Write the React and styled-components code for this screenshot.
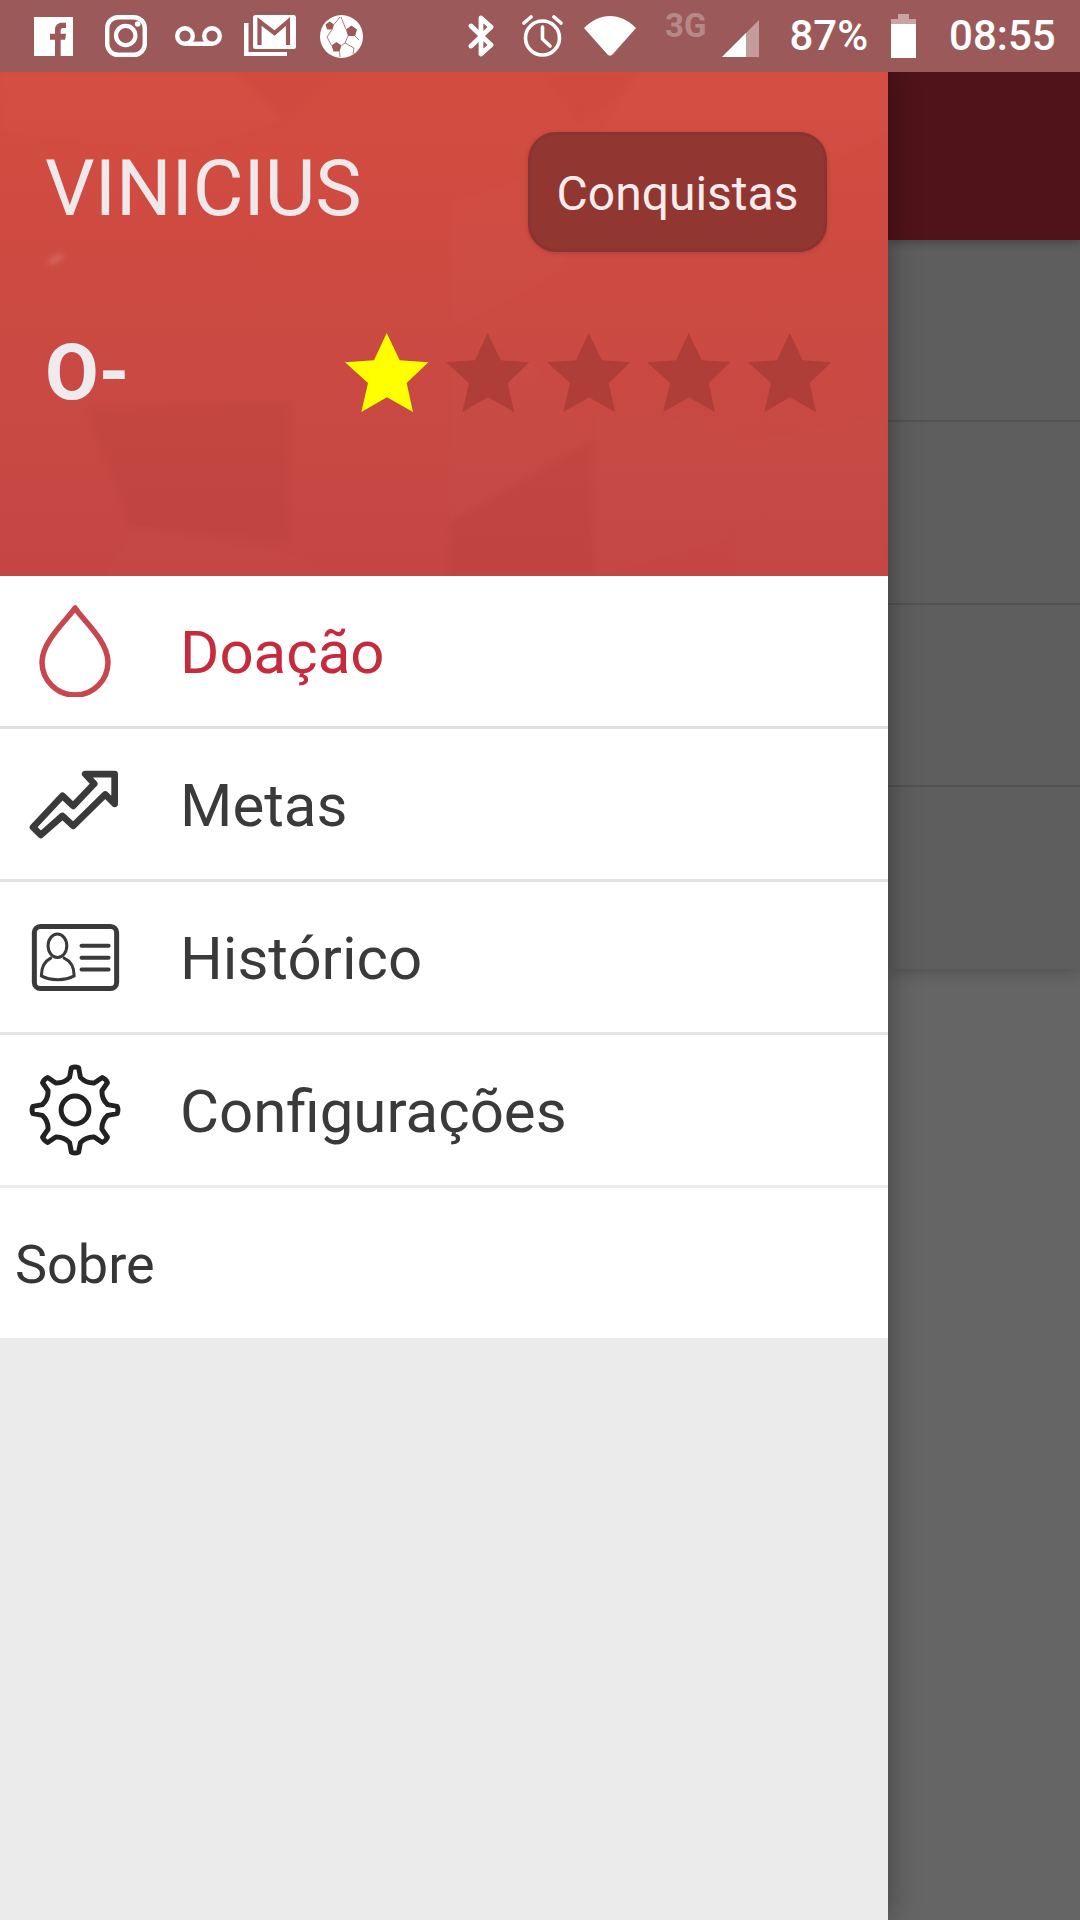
import React from "react";
import styled, { createGlobalStyle } from "styled-components";

const GlobalStyle = createGlobalStyle`
html, body {
    margin: 0;
    padding: 0;
    background: #656565;
    font-family: Roboto, "Liberation Sans", sans-serif;
}
* { box-sizing: border-box; }
`

const Screen = styled.div`
width: 1080px;
height: 1920px;
display: flex;
flex-direction: column;
overflow: hidden;
`

const StatusBar = styled.div`
height: 72px;
flex: none;
display: flex;
align-items: center;
background-color: #9b5a59;
color: #fff;
position: relative;
z-index: 2;
`

const StatusIcon = styled.svg`
flex: none;
display: block;
margin-left: ${props => props.$left}px;
margin-top: ${props => props.$top || 0}px;
`

const StatusText = styled.span`
flex: none;
font-size: ${props => props.$size || 42}px;
font-weight: ${props => props.$weight || 500};
line-height: 1;
margin-left: ${props => props.$left}px;
margin-top: ${props => props.$top || 0}px;
color: ${props => props.$color || "#fff"};
white-space: nowrap;
`

const Body = styled.div`
flex: 1;
display: flex;
min-height: 0;
`

const Drawer = styled.div`
width: 888px;
flex: none;
display: flex;
flex-direction: column;
background-color: #ecebec;
box-shadow: 0 0 28px rgba(0, 0, 0, 0.36);
position: relative;
z-index: 1;
`

const Header = styled.div`
height: 504px;
flex: none;
padding: 60px 56px 0 45px;
position: relative;
overflow: hidden;
background: linear-gradient(180deg, #d44c40 0%, #cb4a42 50%, #c44544 100%);
`

const Facets = styled.svg`
position: absolute;
top: 0;
left: 0;
filter: blur(3px);
`

const HeaderContent = styled.div`
position: relative;
`

const TopRow = styled.div`
display: flex;
justify-content: space-between;
align-items: flex-start;
height: 120px;
`

const UserName = styled.div`
font-size: 78px;
font-weight: 400;
line-height: 78px;
margin-top: 18px;
color: #f0e8ea;
`

const AchievementsButton = styled.button`
width: 299px;
height: 120px;
margin-right: 5px;
border: 3px solid #8b3330;
border-radius: 28px;
background-color: #923632;
color: #f7ecec;
font-family: inherit;
font-size: 48px;
font-weight: 400;
padding: 2px 0 0;
box-shadow: 0 1px 4px rgba(120, 30, 30, 0.3);
`

const InfoRow = styled.div`
display: flex;
justify-content: space-between;
align-items: flex-start;
margin-top: 81px;
`

const BloodType = styled.div`
font-size: 78px;
font-weight: 700;
line-height: 78px;
margin-top: 1px;
color: #eeeaee;
`

const Stars = styled.div`
display: flex;
gap: 16.7px;
`

const Star = styled.svg`
display: block;
width: 84px;
height: 80px;
fill: ${props => props.$on ? "#ffff00" : "#ae3e37"};
`

const Menu = styled.div`
display: flex;
flex-direction: column;
background-color: #fff;
`

const MenuRow = styled.div`
height: ${props => props.$height || 153}px;
display: flex;
align-items: center;
border-bottom: ${props => props.$line ? `3px solid ${props.$line}` : "0"};
`

const IconSlot = styled.div`
width: 150px;
flex: none;
display: flex;
justify-content: center;
`

const MenuLabel = styled.span`
margin-left: 30px;
padding-top: 4px;
font-size: 60px;
line-height: 1;
color: ${props => props.$active ? "#c62b3d" : "#3a3a3a"};
`

const AboutLabel = styled.span`
margin-left: 15px;
padding-top: 4px;
font-size: 54px;
line-height: 1;
color: #363636;
`

const Backdrop = styled.div`
flex: 1;
display: flex;
flex-direction: column;
background-color: #656565;
`

const AppBar = styled.div`
height: 168px;
flex: none;
background-color: #4f1319;
box-shadow: 0 3px 8px rgba(0, 0, 0, 0.25);
position: relative;
`

const ListCard = styled.div`
height: 729px;
flex: none;
display: flex;
flex-direction: column;
background-color: #5f5e5f;
box-shadow: 0 4px 14px rgba(0, 0, 0, 0.18);
`

const ListItem = styled.div`
height: ${props => props.$height}px;
flex: none;
border-bottom: ${props => props.$last ? "0" : "2px solid #535253"};
`

function gearPath(cx, cy, outer, inner, teeth) {
    const step = (Math.PI * 2) / teeth
    let d = ""
    const pt = (r, a) => `${(cx + r * Math.sin(a)).toFixed(1)} ${(cy - r * Math.cos(a)).toFixed(1)}`
    for (let i = 0; i < teeth; i++) {
        const a = i * step
        const s = step * 0.2
        d += `${i === 0 ? "M" : "L"}${pt(outer, a - s * 0.55)} `
        d += `Q${pt(outer + 4, a)} ${pt(outer, a + s * 0.55)} `
        d += `L${pt(inner + 6, a + s * 1.05)} `
        d += `Q${pt(inner - 7, a + step / 2)} ${pt(inner + 6, a + step - s * 1.05)} `
    }
    return d + "Z"
}

const STAR_POINTS = "41.7,0 54.7,27.3 83.3,29.3 61.7,50 68,79 42,64.3 16.3,79 23,50 0,29.3 29,27.3"

function HeaderFacets() {
    return (
        <Facets width="888" height="504" viewBox="0 0 888 504">
            <polygon points="0,0 235,0 285,50 200,75 60,70 0,60" fill="#fff" opacity="0.012" />
            <polygon points="240,0 340,0 285,50" fill="#000" opacity="0.012" />
            <polygon points="545,0 640,0 580,50" fill="#000" opacity="0.014" />
            <polygon points="640,0 888,0 888,60 750,130 600,60" fill="#fff" opacity="0.014" />
            <polygon points="450,130 640,60 560,200 450,260" fill="#fff" opacity="0.01" />
            <polygon points="85,335 290,330 290,470 130,455" fill="#000" opacity="0.014" />
            <polygon points="130,455 290,480 330,504 105,504" fill="#fff" opacity="0.012" />
            <polygon points="450,300 530,290 595,368 450,450" fill="#fff" opacity="0.014" />
            <polygon points="590,368 595,504 450,504 450,450" fill="#000" opacity="0.014" />
            <polygon points="595,340 740,350 730,470 595,504" fill="#fff" opacity="0.01" />
            <polygon points="730,370 888,340 888,504 735,504" fill="#fff" opacity="0.01" />
            <polygon points="49,189 63,182 62,185 50,192" fill="#fff" opacity="0.4" />
        </Facets>
    )
}

function Status() {
    return (
        <StatusBar>
            <StatusIcon $left={34} width="39" height="39" viewBox="0 0 39 39">
                <path fill="#fff" fillRule="evenodd" d="M0 0H39V39H0ZM21 39V22.7H16V16.7H21V13C21 8 24 5.7 28 5.7H32V11H29C27.5 11 26.7 12 26.7 13.5V16.7H32L31.2 22.7H26.7V39Z" />
            </StatusIcon>
            <StatusIcon $left={32} width="42" height="42" viewBox="0 0 42 42" fill="none" stroke="#fff">
                <rect x="2.2" y="2.2" width="37.6" height="37.6" rx="11" strokeWidth="4.4" />
                <circle cx="20.7" cy="20.5" r="9.7" strokeWidth="4.2" />
                <circle cx="32.7" cy="9" r="2.8" fill="#fff" stroke="none" />
            </StatusIcon>
            <StatusIcon $left={28} width="47" height="20" viewBox="0 0 47 20" fill="none" stroke="#fff" strokeWidth="4.4">
                <circle cx="10" cy="10" r="7.8" />
                <circle cx="37" cy="10" r="7.8" />
                <line x1="10" y1="17.8" x2="37" y2="17.8" />
            </StatusIcon>
            <StatusIcon $left={22} width="52" height="42" viewBox="0 0 52 42">
                <path fill="#fff" d="M0 8h4.5v29H43v4H0Z" />
                <rect x="9" y="0" width="43" height="34" rx="2.5" fill="#fff" />
                <path fill="none" stroke="#9b5a59" strokeWidth="4.2" d="M15.5 30V6.5L30.5 18 44 6.5V30" />
            </StatusIcon>
            <StatusIcon $left={24} width="43" height="43" viewBox="0 0 43 43">
                <circle cx="21.5" cy="21.5" r="21.5" fill="#fff" />
                <g fill="#9b5a59">
                    <polygon points="31.5,10.5 37,14.5 35,21 28,21 26,14.5" />
                    <polygon points="9.8,6.5 14,9.5 12.5,14.5 7,14.5 5.5,9.5" />
                    <polygon points="16.5,27 21.5,30.5 19.5,36.5 13.5,36.5 11.5,30.5" />
                </g>
                <g fill="none" stroke="#9b5a59" strokeWidth="0.8">
                    <path d="M21 2 L26 14.5 M14 9.5 L20 2 M28 21 L25 28 L21.5 30.5 M25 28 L34 33 M35 21 L39 25 M12 14.5 L7 22 L11.5 30.5 M34 33 L33 39 M19.5 36.5 L20 42" />
                </g>
            </StatusIcon>

            <StatusIcon $left={105} width="27" height="42" viewBox="0 0 27 42" fill="none" stroke="#fff" strokeWidth="4.8" strokeLinecap="round" strokeLinejoin="round">
                <path d="M3 11 L23 30 L13 39 V3 L23 12 L3 31" />
            </StatusIcon>
            <StatusIcon $left={27} width="41" height="42" viewBox="0 0 41 42" fill="none" stroke="#fff" strokeWidth="3.6" strokeLinecap="round" strokeLinejoin="round">
                <circle cx="20.5" cy="23" r="17" />
                <path d="M20.5 12 V24 L28 31" />
                <path d="M2 8 L9 2 M39 8 L32 2" />
            </StatusIcon>
            <StatusIcon $left={21} width="52" height="40" viewBox="0 0 52 40">
                <path fill="#fff" d="M0 12 C8 4 17 0 26 0 C35 0 44 4 52 12 L28.5 38.5 C27 40 25 40 23.5 38.5 Z" />
            </StatusIcon>
            <StatusText $left={29} $size={33} $weight={700} $top={-21} $color="rgba(255,255,255,0.3)">3G</StatusText>
            <StatusIcon $left={16} $top={5} width="37" height="37" viewBox="0 0 37 37">
                <polygon points="37,0 37,37 0,37" fill="#fff" opacity="0.4" />
                <polygon points="24,13 24,37 0,37" fill="#fff" />
            </StatusIcon>
            <StatusText $left={30}>87%</StatusText>
            <StatusIcon $left={23} width="25" height="44" viewBox="0 0 25 44">
                <rect x="7" y="0" width="11" height="5" fill="#fff" opacity="0.45" />
                <rect x="0" y="5" width="25" height="5" fill="#fff" opacity="0.45" />
                <rect x="0" y="10" width="25" height="34" fill="#fff" />
            </StatusIcon>
            <StatusText $left={33}>08:55</StatusText>
        </StatusBar>
    )
}

function App() {
    return (
        <Screen>
            <GlobalStyle />
            <Status />
            <Body>
                <Drawer>
                    <Header>
                        <HeaderFacets />
                        <HeaderContent>
                            <TopRow>
                                <UserName>VINICIUS</UserName>
                                <AchievementsButton>Conquistas</AchievementsButton>
                            </TopRow>
                            <InfoRow>
                                <BloodType>O-</BloodType>
                                <Stars>
                                    {[true, false, false, false, false].map((on, i) => (
                                        <Star key={i} $on={on} viewBox="0 0 84 80">
                                            <polygon points={STAR_POINTS} />
                                        </Star>
                                    ))}
                                </Stars>
                            </InfoRow>
                        </HeaderContent>
                    </Header>
                    <Menu>
                        <MenuRow $line="#dfdfdf">
                            <IconSlot>
                                <svg width="72" height="92" viewBox="0 0 72 92" fill="none" stroke="#c8474f" strokeWidth="5.5">
                                    <path d="M36 3 C29 14 3 36 3 57 A33 33 0 0 0 69 57 C69 36 43 14 36 3 Z" strokeLinejoin="round" />
                                </svg>
                            </IconSlot>
                            <MenuLabel $active>Doação</MenuLabel>
                        </MenuRow>
                        <MenuRow $line="#e2e2e2">
                            <IconSlot>
                                <svg width="92" height="72" viewBox="90 565 275 215" fill="none" stroke="#3a3a3a" strokeWidth="20" strokeLinejoin="round" strokeLinecap="round">
                                    <path d="M258 583 H346 V672 L318 644 L222 738 L190 708 L125 765 L102 742 L190 648 L222 678 L285 612 Z" />
                                </svg>
                            </IconSlot>
                            <MenuLabel>Metas</MenuLabel>
                        </MenuRow>
                        <MenuRow $line="#e4e4e4">
                            <IconSlot>
                                <svg width="91" height="71" viewBox="90 124 272 212" fill="none" stroke="#3a3a3a" strokeLinecap="round">
                                    <rect x="103" y="137" width="246" height="186" rx="18" strokeWidth="15" />
                                    <ellipse cx="172" cy="195" rx="28" ry="35" strokeWidth="9" />
                                    <path d="M152 232 C136 240 124 258 124 285 C150 300 195 300 222 285 C222 258 210 240 192 232" strokeWidth="9" />
                                    <path d="M244 195 H325 M244 231 H325 M244 266 H325" strokeWidth="12" />
                                </svg>
                            </IconSlot>
                            <MenuLabel>Histórico</MenuLabel>
                        </MenuRow>
                        <MenuRow $line="#ebebeb">
                            <IconSlot>
                                <svg width="92" height="92" viewBox="86 552 278 278" fill="none" stroke="#222" strokeWidth="15" strokeLinejoin="round">
                                    <path d={gearPath(225, 691, 128, 94, 8)} />
                                    <circle cx="225" cy="691" r="42" />
                                </svg>
                            </IconSlot>
                            <MenuLabel>Configurações</MenuLabel>
                        </MenuRow>
                        <MenuRow $height={150}>
                            <AboutLabel>Sobre</AboutLabel>
                        </MenuRow>
                    </Menu>
                </Drawer>
                <Backdrop>
                    <AppBar />
                    <ListCard>
                        <ListItem $height={182} />
                        <ListItem $height={183} />
                        <ListItem $height={182} />
                        <ListItem $height={182} $last />
                    </ListCard>
                </Backdrop>
            </Body>
        </Screen>
    )
}

export default App;
